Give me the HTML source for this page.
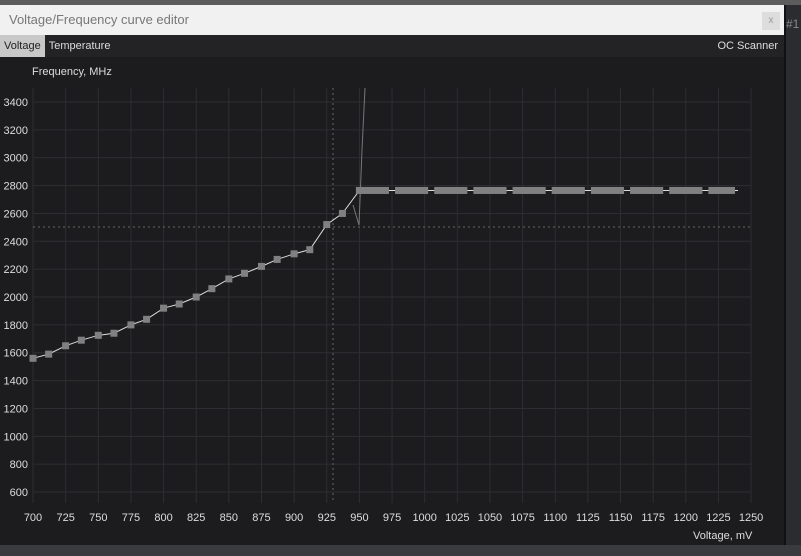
<!DOCTYPE html>
<html><head><meta charset="utf-8"><style>
body{margin:0;width:801px;height:556px;overflow:hidden;background:#3a3b3f;font-family:"Liberation Sans",sans-serif;position:relative}
.top{position:absolute;left:0;top:0;width:801px;height:5px;background:#5c5c5c}
.win{position:absolute;left:0;top:5px;width:784px;height:540px;background:#1c1c1f;border-right:2px solid #111}
.title{height:30px;background:#f1f1f1;color:#777;font-size:13px;line-height:30px;padding-left:9px}
.x{position:absolute;right:4px;top:7px;width:18px;height:18px;background:#ddd;color:#999;font-size:10px;text-align:center;line-height:18px}
.tabs{height:22px;background:#232326;font-size:11px;color:#ddd;position:relative}
.tabs span{display:inline-block;line-height:22px;padding:0 4px}
.sel{background:#c8c8c8;color:#222}
.side{position:absolute;left:786px;top:5px;width:15px;height:540px;background:#2b2c30;color:#888;font-size:12px}
svg{position:absolute;left:0;top:0}
</style></head><body>
<div class="top"></div>
<div class="side"><div style="margin-top:12px">#1</div></div>
<div class="win">
<div class="title">Voltage/Frequency curve editor<div class="x">x</div></div>
<div class="tabs"><span class="sel">Voltage</span><span>Temperature</span><span style="position:absolute;right:2px">OC Scanner</span></div>
</div>
<svg id="s" width="801" height="556" font-family="Liberation Sans, sans-serif" font-size="11" fill="#ddd"></svg>
<script>
var s=document.getElementById('s'),h='';
var X=v=>33+(v-700)/25*32.64, Y=f=>102+(3400-f)/200*27.86;
h+='<text x="32" y="75">Frequency, MHz</text><text x="693" y="539">Voltage, mV</text>';
for(var v=700;v<=1250;v+=25){var x=X(v);h+='<line x1="'+x+'" y1="88" x2="'+x+'" y2="503" stroke="#2e2e32"/>';h+='<text x="'+x+'" y="521" text-anchor="middle">'+v+'</text>';}
for(var f=600;f<=3400;f+=200){var y=Y(f);h+='<line x1="33" y1="'+y+'" x2="751" y2="'+y+'" stroke="#2e2e32"/>';h+='<text x="28" y="'+(y+4)+'" text-anchor="end">'+f+'</text>';}
h+='<line x1="333" y1="88" x2="333" y2="503" stroke="#666" stroke-dasharray="2,3"/>';
h+='<line x1="33" y1="227" x2="751" y2="227" stroke="#666" stroke-dasharray="2,3"/>';
var pts=[[700,1560],[712,1590],[725,1650],[737,1690],[750,1725],[762,1740],[775,1800],[787,1840],[800,1920],[812,1950],[825,2000],[837,2060],[850,2130],[862,2170],[875,2220],[887,2270],[900,2310],[912,2340],[925,2520],[937,2600],[950,2765],[1240,2765]];
var d=pts.map(p=>X(p[0])+','+Y(p[1])).join(' ');
h+='<polyline points="'+d+'" fill="none" stroke="#ddd" stroke-width="1"/>';
h+='<polyline points="365,88 362,150 359,225 353,205" fill="none" stroke="#777"/>';
for(var i=0;i<pts.length-1;i++){var a=pts[i],b=pts[i+1];var n=a[0]>=950?Math.floor((b[0]-a[0])/5):1;for(var k=0;k<n;k++){var v=a[0]+(b[0]-a[0])*k/n,f=a[1]+(b[1]-a[1])*k/n;if(a[0]>=950&&(k%6==5))continue;h+='<rect x="'+(X(v)-3.5)+'" y="'+(Y(f)-3.5)+'" width="7" height="7" fill="#808080"/>';}}
s.innerHTML=h;
</script>
</body></html>
